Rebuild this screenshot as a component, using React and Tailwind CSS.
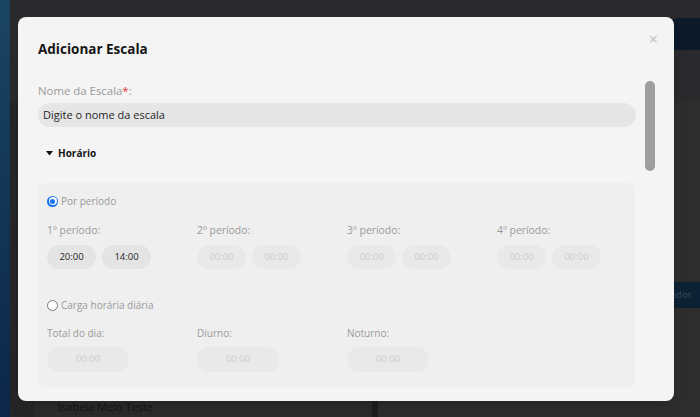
import { useState } from 'react';

const font = { fontFamily: '"Open Sans", "Noto Sans", Arial, sans-serif' };

function Radio({ checked, label }) {
  return (
    <label className="flex items-center gap-[3px] h-[16px]">
      <span
        className={
          checked
            ? 'w-[11px] h-[11px] rounded-full bg-[#1672f3] flex items-center justify-center'
            : 'w-[11px] h-[11px] rounded-full border border-[#777] bg-white'
        }
      >
        {checked && (
          <span className="w-[8px] h-[8px] rounded-full bg-white flex items-center justify-center">
            <span className="w-[5px] h-[5px] rounded-full bg-[#1672f3]" />
          </span>
        )}
      </span>
      <span className="text-[10px] text-[#9a9a9a] leading-[16px]">{label}</span>
    </label>
  );
}

function TimeBox({ value, active, wide }) {
  return (
    <div
      className={`${wide ? 'w-[82px] h-[25px]' : 'w-[49px] h-[24px]'} rounded-[12px] flex items-center justify-center text-[9.5px] ${
        active ? 'bg-[#e4e4e4] text-[#1f1f1f]' : 'bg-[#e9e9e9] text-[#cdcdcd]'
      }`}
    >
      {value}
    </div>
  );
}

const periods = [
  { label: '1º período:', from: '20:00', to: '14:00', active: true },
  { label: '2º período:', from: '00:00', to: '00:00' },
  { label: '3º período:', from: '00:00', to: '00:00' },
  { label: '4º período:', from: '00:00', to: '00:00' },
];

const totals = ['Total do dia:', 'Diurno:', 'Noturno:'];

export default function App() {
  const [name] = useState('');

  return (
    <div className="relative w-[700px] h-[417px] overflow-hidden bg-[#2a2a2c]" style={font}>
      {/* page behind the overlay */}
      <div className="flex h-full">
        <div className="w-[10px] h-full bg-gradient-to-b from-[#1b4463] to-[#0c2748]" />
        <div className="flex-1 flex flex-col">
          <div className="h-[102px] bg-[#2a2a2c] flex justify-end pt-[18px]">
            <div className="w-[30px] h-[32px] rounded-l-[8px] bg-[#0b1929]" />
          </div>
          <div className="flex-1 flex">
            <div className="w-[24px] bg-[#262626]" />
            <div className="w-[338px] bg-[#2b2b2b] flex flex-col justify-end">
              <div className="h-[16px] pl-[24px] text-[11px] text-[#141414] leading-[12px]">Isabela Melo Teste</div>
            </div>
            <div className="w-[6px] bg-[#1e1e1e]" />
            <div className="flex-1 bg-[#2d2d2d] pt-[180px]">
              <div className="ml-[274px] h-[26px] bg-[#0d2134] flex items-center pl-[14px] text-[9px] text-[#3d4c5b]">Todos</div>
            </div>
          </div>
        </div>
      </div>

      {/* modal */}
      <div className="absolute left-[18px] top-[17px] w-[656px] h-[384px] rounded-[8px] bg-[#f4f4f4] overflow-hidden shadow-lg">
        <button className="absolute right-[16px] top-[14px] text-[#bdbdbd] text-[16px] leading-none">×</button>
        <div className="absolute left-[627px] top-[64px] w-[10px] h-[90px] rounded-full bg-[#9e9e9e]" />

        <div className="pl-[20px] pt-[22px] w-[618px]">
          <h2 className="text-[13.5px] font-bold text-[#161616] leading-[20px]">Adicionar Escala</h2>

          <div className="mt-[24px] text-[11.4px] text-[#9a9a9a] leading-[16px]">
            Nome da Escala<span className="text-[#e53935]">*</span>:
          </div>
          <div className="mt-[4px] h-[24px] rounded-[12px] bg-[#e6e6e6] flex items-center pl-[5px] text-[11px] text-[#1e1e1e]">
            {name || 'Digite o nome da escala'}
          </div>

          <div className="mt-[18px] flex items-center h-[16px] pl-[8px] gap-[5px]">
            <svg width="7" height="5" viewBox="0 0 7 5">
              <path d="M0 0h7L3.5 4.5z" fill="#111" />
            </svg>
            <span className="text-[10px] font-bold text-[#161616]">Horário</span>
          </div>

          <div className="mt-[22px] w-[597px] rounded-[6px] bg-[#efefef] pl-[9px] pt-[10px] pb-[16px]">
            <Radio checked label="Por período" />
            <div className="mt-[13px] grid grid-cols-4 w-[600px]">
              {periods.map((p) => (
                <div key={p.label}>
                  <div className="text-[10.4px] text-[#9a9a9a] leading-[16px]">{p.label}</div>
                  <div className="mt-[7px] flex gap-[6px]">
                    <TimeBox value={p.from} active={p.active} />
                    <TimeBox value={p.to} active={p.active} />
                  </div>
                </div>
              ))}
            </div>

            <div className="mt-[28px]">
              <Radio label="Carga horária diária" />
            </div>
            <div className="mt-[12px] grid grid-cols-4 w-[600px]">
              {totals.map((t) => (
                <div key={t}>
                  <div className="text-[10px] text-[#9a9a9a] leading-[16px]">{t}</div>
                  <div className="mt-[6px]">
                    <TimeBox value="00:00" wide />
                  </div>
                </div>
              ))}
            </div>
          </div>
        </div>
      </div>
    </div>
  );
}
